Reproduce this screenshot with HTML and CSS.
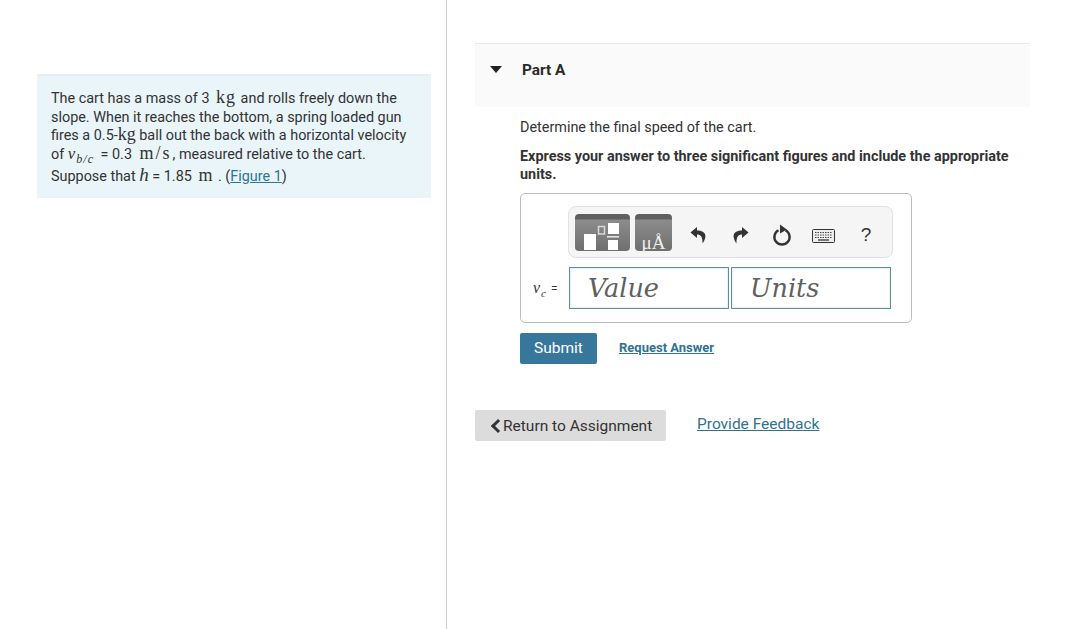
FILE: index.html
```html
<!DOCTYPE html>
<html lang="en">
<head>
  <meta charset="UTF-8">
  <title>Part A</title>
  <link rel="stylesheet" href="styles.css">
</head>
<body>
  <div class="intro-pane">
    <div class="intro">
      The cart has a mass of 3 <span class="unit">kg</span> and rolls freely down the slope. When it reaches the bottom, a spring loaded gun fires a 0.5-<span class="unit tight">kg</span> ball out the back with a horizontal velocity of <span class="var">v<sub>b/c</sub></span> = 0.3 <span class="unit wide">m/s</span>, measured relative to the cart. Suppose that <span class="var big">h</span> = 1.85 <span class="unit">m</span> . (<a href="#">Figure 1</a>)
    </div>
  </div>

  <div class="main-pane">
    <div class="part-head">
      <span class="caret"></span>
      <span class="part-title">Part A</span>
    </div>

    <div class="part-body">
      <p class="question">Determine the final speed of the cart.</p>
      <p class="instructions">Express your answer to three significant figures and include the appropriate units.</p>

      <div class="answer-box">
        <div class="toolbar">
          <div class="tpl tpl-wide">
            <svg width="55" height="37" viewBox="0 0 55 37">
              <rect x="9" y="20" width="12" height="16" fill="#fff"/>
              <rect x="23.5" y="12.5" width="6" height="7.5" fill="none" stroke="#d8d8d8" stroke-width="1.5"/>
              <rect x="33" y="9" width="11" height="11" fill="#fff"/>
              <rect x="32" y="22" width="12" height="1.6" fill="#e4e4e4"/>
              <rect x="33" y="26" width="10" height="10" fill="#fff"/>
            </svg>
          </div>
          <div class="tpl tpl-units">&mu;&#197;</div>
          <button class="tool tool-undo"><svg width="16" height="18" viewBox="0 0 16 18"><path d="M7 1 L0.5 6.5 L7 12 V8.6 C10.5 8.6 12.6 10.5 12.6 17.5 C15 14 15.6 11.4 15.4 9.6 C15 5.8 11.5 4.4 7 4.4 Z" fill="#333"/></svg></button>
          <button class="tool tool-redo"><svg width="16" height="18" viewBox="0 0 16 18"><path d="M9 1 L15.5 6.5 L9 12 V8.6 C5.5 8.6 3.4 10.5 3.4 17.5 C1 14 0.4 11.4 0.6 9.6 C1 5.8 4.5 4.4 9 4.4 Z" fill="#333"/></svg></button>
          <button class="tool tool-reset"><svg width="20" height="22" viewBox="0 0 20 22"><path d="M6.5 6.2 A7.6 7.6 0 1 0 13.5 6.2" fill="none" stroke="#333" stroke-width="2.4"/><path d="M8 0.5 L14.8 5.6 L8 9.6 Z" fill="#333"/></svg></button>
          <button class="tool tool-keys"><svg width="23" height="14" viewBox="0 0 23 14"><rect x="0.5" y="0.5" width="22" height="13" rx="1" fill="#eee" stroke="#333"/><path d="M3 3.5 H20 M3 6 H20 M3 8.5 H20" stroke="#444" stroke-width="1.2" stroke-dasharray="1.5 1"/><path d="M6 11 H17" stroke="#444" stroke-width="1.4"/></svg></button>
          <button class="tool help">?</button>
        </div>

        <div class="answer-row">
          <span class="answer-label"><span class="var">v<sub>c</sub></span><span class="equals">=</span></span>
          <div class="field">Value</div>
          <div class="field">Units</div>
        </div>
      </div>

      <div class="actions">
        <button class="submit">Submit</button>
        <a class="request" href="#">Request Answer</a>
      </div>
    </div>

    <div class="footer">
      <button class="return"><span class="chevron"></span>Return to Assignment</button>
      <a class="feedback" href="#">Provide Feedback</a>
    </div>
  </div>
</body>
</html>
```

FILE: styles.css
```css
body {
  margin: 0;
  display: flex;
  min-height: 629px;
  font-family: Roboto, sans-serif;
  color: #333;
  background: #fff;
  overflow: hidden;
}

a {
  color: #2f7391;
}

.intro-pane {
  width: 447px;
  height: 629px;
  box-sizing: border-box;
  padding: 74px 15px 0 37px;
  border-right: 1px solid #ccc;
  flex-shrink: 0;
}

.intro {
  background: #e9f5f8;
  border-top: 2px solid #e3f0f4;
  padding: 14px 14px 13px;
  font-size: 14.4px;
  line-height: 18.5px;
  height: 95px;
}

.unit {
  font-family: "Liberation Serif", serif;
  font-size: 18px;
  letter-spacing: 1px;
  margin: 0 1px 0 3px;
  line-height: 0;
}

.unit.tight {
  margin: 0;
  letter-spacing: 0;
}

.unit.wide {
  letter-spacing: 2px;
  margin-left: 4px;
}

.var {
  font-family: "Liberation Serif", serif;
  font-style: italic;
  font-size: 17px;
  line-height: 0;
}

.var.big {
  font-size: 19px;
  line-height: 22px;
}

.var sub {
  font-size: 12px;
  letter-spacing: 1px;
  margin-left: 1px;
  margin-right: 3px;
  line-height: 0;
}

.main-pane {
  flex: 1;
  padding: 43px 50px 0 28px;
}

.part-head {
  height: 63px;
  display: flex;
  align-items: flex-start;
  background: #fafafa;
  border-top: 1px solid #e8e8e8;
}

.caret {
  width: 0;
  height: 0;
  margin: 22px 0 0 15px;
  border-left: 6.5px solid transparent;
  border-right: 6.5px solid transparent;
  border-top: 7px solid #222;
}

.part-title {
  margin: 17px 0 0 20px;
  font-size: 15.4px;
  font-weight: 700;
  line-height: 18px;
  color: #2a2a2a;
}

.part-body {
  padding-left: 45px;
}

.question {
  margin: 12px 0 0;
  font-size: 14.4px;
  line-height: 18px;
}

.instructions {
  margin: 11px 0 0;
  font-size: 14.4px;
  font-weight: 700;
  line-height: 18px;
}

.answer-box {
  width: 390px;
  height: 116px;
  margin-top: 9px;
  border: 1px solid #bbb;
  border-radius: 5px;
  padding-top: 12px;
}

.toolbar {
  width: 311px;
  height: 50px;
  margin-left: 47px;
  padding: 0 6px;
  display: flex;
  align-items: center;
  background: #f5f5f5;
  border: 1px solid #e2e2e2;
  border-radius: 8px;
}

.tpl {
  height: 37px;
  flex: none;
  border-radius: 4px;
  background: linear-gradient(#5f5f5f 0, #5f5f5f 5px, #8c8c8c 6px, #6f6f6f 100%);
  color: #fff;
}

.tpl-wide {
  width: 55px;
}

.tpl-units {
  width: 37px;
  box-sizing: border-box;
  margin-left: 5px;
  padding-bottom: 1px;
  display: flex;
  align-items: flex-end;
  justify-content: center;
  font-family: "Liberation Serif", serif;
  font-size: 19px;
  line-height: 14px;
  white-space: nowrap;
  color: #f0f0f0;
}

.tool {
  flex: none;
  height: 37px;
  padding: 5px 0 0;
  border: none;
  background: none;
  color: #333;
  display: flex;
  align-items: center;
  justify-content: center;
}

.tool-undo {
  width: 42px;
  margin-left: 5px;
}

.tool-redo {
  width: 44px;
}

.tool-reset {
  width: 38px;
}

.tool-keys {
  width: 44px;
  padding-top: 8px;
}

.help {
  width: 42px;
  font-family: "Liberation Sans", sans-serif;
  font-size: 19px;
}

.answer-row {
  display: flex;
  align-items: center;
  margin-top: 9px;
}

.answer-label {
  width: 48px;
  box-sizing: border-box;
  padding-left: 12px;
  font-size: 12px;
  display: flex;
  align-items: baseline;
}

.answer-label .var {
  font-size: 16px;
  line-height: 18px;
}

.answer-label sub {
  font-size: 11px;
  margin-right: 0;
}

.equals {
  margin-left: 4px;
}

.field {
  width: 160px;
  height: 42px;
  box-sizing: border-box;
  margin-right: 2px;
  padding-left: 18px;
  border: 1px solid #5c8ea5;
  box-shadow: inset 0 0 0 1px #eaf2f5;
  font-family: "DejaVu Serif", serif;
  font-style: italic;
  font-size: 25.5px;
  line-height: 40px;
  color: #606060;
}

.actions {
  display: flex;
  align-items: center;
  margin-top: 10px;
}

.submit {
  width: 77px;
  height: 31px;
  padding: 0 0 2px;
  border: none;
  border-radius: 2px;
  background: #38779c;
  color: #fff;
  font-family: Roboto, sans-serif;
  font-size: 15.5px;
}

.request {
  margin: 0 0 2px 22px;
  font-size: 13px;
  font-weight: 700;
}

.footer {
  display: flex;
  align-items: flex-start;
  margin-top: 46px;
}

.return {
  width: 191px;
  height: 31px;
  padding: 0 0 0 14px;
  display: flex;
  align-items: center;
  border: none;
  border-radius: 2px;
  background: #dcdcdc;
  color: #333;
  font-family: Roboto, sans-serif;
  font-size: 15.5px;
}

.chevron {
  width: 7px;
  height: 7px;
  margin-left: 4px;
  flex: none;
  border-left: 3px solid #333;
  border-bottom: 3px solid #333;
  transform: rotate(45deg);
}

.feedback {
  margin: 5px 0 0 31px;
  font-size: 15.5px;
  line-height: 18px;
}
```
